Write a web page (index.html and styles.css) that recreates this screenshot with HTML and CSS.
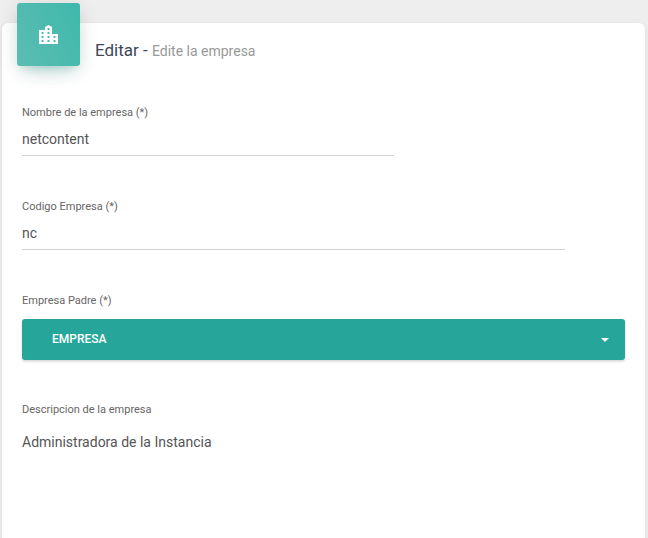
FILE: index.html
```
<!DOCTYPE html>
<html lang="es">
<head>
<meta charset="utf-8">
<title>Editar empresa</title>
<link rel="stylesheet" href="styles.css">
</head>
<body>
<main class="card">
  <header class="card-header">
    <div class="tile">
      <svg class="tile-icon" width="19" height="19" viewBox="0 0 19 19" aria-hidden="true">
        <path fill-rule="evenodd" fill="#fff" d="M0 5H6V2L9.500 0 13 2V9H19V19H0Z M8.500 3v2h2V3z M2.500 7v2h2V7z M8.500 7v2h2V7z M2.500 11v2h2v-2z M8.500 11v2h2v-2z M14.500 11v2h2v-2z M2.500 15v2h2v-2z M8.500 15v2h2v-2z M14.500 15v2h2v-2z"/>
      </svg>
    </div>
    <h1 class="title">Editar <span class="dash">-</span> <small class="subtitle">Edite la empresa</small></h1>
  </header>

  <div class="field field-name">
    <label class="label">Nombre de la empresa (*)</label>
    <div class="value underlined">netcontent</div>
  </div>

  <div class="field field-code">
    <label class="label">Codigo Empresa (*)</label>
    <div class="value underlined">nc</div>
  </div>

  <div class="field field-parent">
    <label class="label">Empresa Padre (*)</label>
    <button class="select" type="button">
      <span>EMPRESA</span>
      <span class="caret"></span>
    </button>
  </div>

  <div class="field field-desc">
    <label class="label">Descripcion de la empresa</label>
    <div class="value desc">Administradora de la Instancia</div>
  </div>
</main>
</body>
</html>
```
FILE: styles.css
```
html, body {
  margin: 0;
  height: 100%;
  overflow: hidden;
}

body {
  background: #eeeeee;
  padding: 23px 3px 0 2px;
  box-sizing: border-box;
  font-family: Roboto, "Liberation Sans", sans-serif;
}

.card {
  background: #fff;
  border-radius: 6px 6px 0 0;
  padding: 0 20px;
  height: 540px;
  box-shadow: 0 1px 4px rgba(0, 0, 0, 0.1);
}

.card-header {
  display: flex;
  align-items: flex-start;
  margin-left: -5px;
}

.tile {
  width: 63px;
  height: 63px;
  margin-top: -20px;
  border-radius: 3px;
  background: linear-gradient(60deg, #5cbdb3, #3fb8ab);
  box-shadow: 0 12px 20px -10px rgba(38, 166, 154, 0.28), 0 4px 20px 0 rgba(0, 0, 0, 0.12), 0 7px 8px -5px rgba(38, 166, 154, 0.2);
  display: flex;
  align-items: center;
  justify-content: center;
}

.tile-icon {
  display: block;
}

.title {
  margin: 18px 0 0 15px;
  font-size: 17px;
  font-weight: 400;
  line-height: 19px;
  color: #3c4858;
}

.subtitle {
  font-size: 14px;
  color: #999;
}

.field {
  display: flex;
  flex-direction: column;
  align-items: flex-start;
}

.label {
  font-size: 11px;
  line-height: 14px;
  color: #666;
}

.value {
  font-size: 14px;
  line-height: 20px;
  color: #555;
}

.underlined {
  box-sizing: border-box;
  height: 36px;
  padding-top: 9px;
  border-bottom: 1px solid #d2d2d2;
}

.field-name { margin-top: 40px; }
.field-name .underlined { width: 372px; }
.field-code { margin-top: 44px; }
.field-code .underlined { width: 543px; }
.field-parent { margin-top: 44px; }

.select {
  display: flex;
  align-items: center;
  justify-content: space-between;
  box-sizing: border-box;
  width: 603px;
  height: 41px;
  margin-top: 11px;
  padding: 0 16px 2px 30px;
  border: 0;
  border-radius: 3px;
  background: #26a69a;
  box-shadow: 0 2px 2px 0 rgba(0, 0, 0, 0.08), 0 1px 3px 0 rgba(0, 0, 0, 0.1);
  color: #fff;
  font-family: inherit;
  font-size: 12px;
  font-weight: 500;
}

.caret {
  width: 0;
  height: 0;
  margin-top: 2px;
  border-top: 4px solid #fff;
  border-left: 4px solid transparent;
  border-right: 4px solid transparent;
}

.field-desc { margin-top: 43px; }
.desc { margin-top: 15px; }
```
